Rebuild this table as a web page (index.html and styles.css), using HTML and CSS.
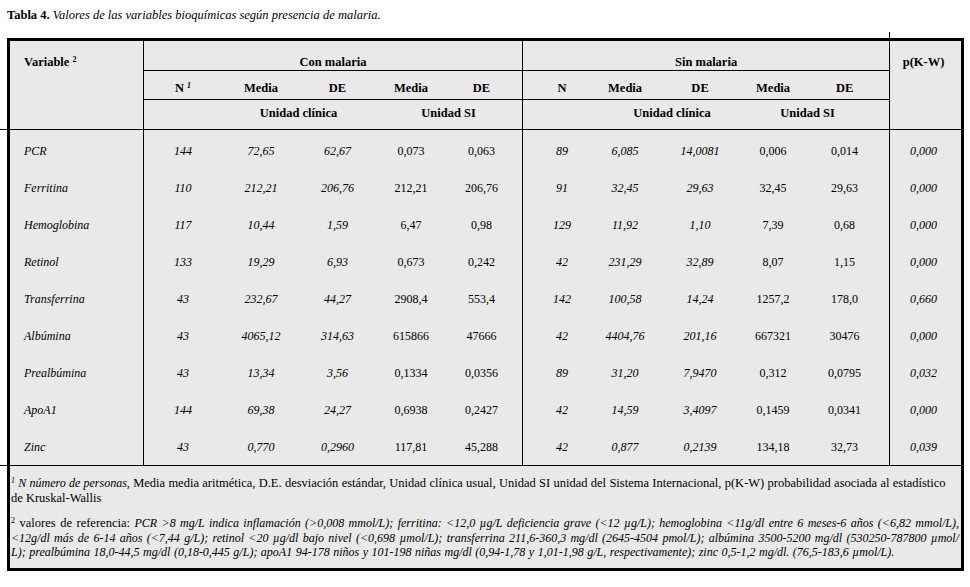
FILE: index.html
```html
<!DOCTYPE html>
<html lang="es">
<head>
<meta charset="utf-8">
<title>Tabla 4</title>
<link rel="stylesheet" href="styles.css">
</head>
<body>
<p class="caption"><b>Tabla 4.</b> <i>Valores de las variables bioquímicas según presencia de malaria.</i></p>
<div class="box">
  <span class="tick tick-h1"></span>
  <span class="tick tick-h2"></span>
  <span class="tick tick-v"></span>
  <table class="data">
    <colgroup>
      <col class="c-var">
      <col class="c-a1"><col class="c-a2"><col class="c-a3"><col class="c-a4"><col class="c-a5">
      <col class="c-b1"><col class="c-b2"><col class="c-b3"><col class="c-b4"><col class="c-b5">
      <col class="c-p">
    </colgroup>
    <thead>
      <tr class="r1">
        <th rowspan="3" class="var">Variable <sup>2</sup></th>
        <th colspan="5" class="grp end">Con malaria</th>
        <th colspan="5" class="grp end">Sin malaria</th>
        <th rowspan="3" class="pcol">p(K-W)</th>
      </tr>
      <tr class="r2">
        <th>N <sup class="it">1</sup></th><th>Media</th><th>DE</th><th>Media</th><th class="end a5">DE</th>
        <th class="b1">N</th><th class="b2">Media</th><th>DE</th><th>Media</th><th class="end b5">DE</th>
      </tr>
      <tr class="r3">
        <th></th><th colspan="2">Unidad clínica</th><th colspan="2" class="end">Unidad SI</th>
        <th></th><th colspan="2" class="ucb">Unidad clínica</th><th colspan="2" class="end usb">Unidad SI</th>
      </tr>
    </thead>
    <tbody>
      <tr><td>PCR</td><td>144</td><td>72,65</td><td>62,67</td><td>0,073</td><td>0,063</td><td>89</td><td>6,085</td><td>14,0081</td><td>0,006</td><td>0,014</td><td>0,000</td></tr>
      <tr><td>Ferritina</td><td>110</td><td>212,21</td><td>206,76</td><td>212,21</td><td>206,76</td><td>91</td><td>32,45</td><td>29,63</td><td>32,45</td><td>29,63</td><td>0,000</td></tr>
      <tr><td>Hemoglobina</td><td>117</td><td>10,44</td><td>1,59</td><td>6,47</td><td>0,98</td><td>129</td><td>11,92</td><td>1,10</td><td>7,39</td><td>0,68</td><td>0,000</td></tr>
      <tr><td>Retinol</td><td>133</td><td>19,29</td><td>6,93</td><td>0,673</td><td>0,242</td><td>42</td><td>231,29</td><td>32,89</td><td>8,07</td><td>1,15</td><td>0,000</td></tr>
      <tr><td>Transferrina</td><td>43</td><td>232,67</td><td>44,27</td><td>2908,4</td><td>553,4</td><td>142</td><td>100,58</td><td>14,24</td><td>1257,2</td><td>178,0</td><td>0,660</td></tr>
      <tr><td>Albúmina</td><td>43</td><td>4065,12</td><td>314,63</td><td>615866</td><td>47666</td><td>42</td><td>4404,76</td><td>201,16</td><td>667321</td><td>30476</td><td>0,000</td></tr>
      <tr><td>Prealbúmina</td><td>43</td><td>13,34</td><td>3,56</td><td>0,1334</td><td>0,0356</td><td>89</td><td>31,20</td><td>7,9470</td><td>0,312</td><td>0,0795</td><td>0,032</td></tr>
      <tr><td>ApoA1</td><td>144</td><td>69,38</td><td>24,27</td><td>0,6938</td><td>0,2427</td><td>42</td><td>14,59</td><td>3,4097</td><td>0,1459</td><td>0,0341</td><td>0,000</td></tr>
      <tr><td>Zinc</td><td>43</td><td>0,770</td><td>0,2960</td><td>117,81</td><td>45,288</td><td>42</td><td>0,877</td><td>0,2139</td><td>134,18</td><td>32,73</td><td>0,039</td></tr>
    </tbody>
  </table>
  <div class="notes">
    <p>
      <span class="ln first"><sup class="it">1</sup> <i>N número de personas,</i> Media media aritmética, D.E. desviación estándar, Unidad clínica usual, Unidad SI unidad del Sistema Internacional, p(K-W) probabilidad asociada al estadístico</span>
      <span class="ln">de Kruskal-Wallis</span>
    </p>
    <p>
      <span class="ln just"><sup>2</sup> valores de referencia: <i>PCR &gt;8 mg/L indica inflamación (&gt;0,008 mmol/L); ferritina: &lt;12,0 µg/L deficiencia grave (&lt;12 µg/L); hemoglobina &lt;11g/dl entre 6 meses-6 años (&lt;6,82 mmol/L),</i></span>
      <span class="ln just"><i>&lt;12g/dl más de 6-14 años (&lt;7,44 g/L); retinol &lt;20 µg/dl bajo nivel (&lt;0,698 µmol/L); transferrina 211,6-360,3 mg/dl (2645-4504 pmol/L); albúmina 3500-5200 mg/dl (530250-787800 µmol/</i></span>
      <span class="ln last"><i>L); prealbúmina 18,0-44,5 mg/dl (0,18-0,445 g/L); apoA1 94-178 niños y 101-198 niñas mg/dl (0,94-1,78 y 1,01-1,98 g/L, respectivamente); zinc 0,5-1,2 mg/dl. (76,5-183,6 µmol/L).</i></span>
    </p>
  </div>
</div>
</body>
</html>
```
FILE: styles.css
```css
html, body {
  background: #fff;
}
body {
  margin: 0;
  padding: 8px 6px 0 7px;
  font-family: "Liberation Serif", "Times New Roman", serif;
  color: #000;
}
.caption {
  margin: 0;
  font-size: 12.5px;
  line-height: 14px;
}
.box {
  position: relative;
  width: 957px;
  box-sizing: border-box;
  margin-top: 16px;
  border: 3px solid #000;
  background: #e9e9e9;
}
.tick {
  position: absolute;
  background: #000;
}
.tick-h1 { left: -10px; top: 88px; width: 7px; height: 1px; }
.tick-h2 { left: -10px; top: 424px; width: 7px; height: 1px; }
.tick-v { left: 879px; top: -9px; width: 1px; height: 6px; }

.data {
  width: 100%;
  table-layout: fixed;
  border-collapse: separate;
  border-spacing: 0;
  font-size: 12px;
  line-height: 14px;
}
.c-var { width: 134px; }
.c-a1 { width: 78px; }
.c-a2 { width: 78px; }
.c-a3 { width: 75px; }
.c-a4 { width: 72px; }
.c-a5 { width: 76px; }
.c-b1 { width: 71px; }
.c-b2 { width: 69px; }
.c-b3 { width: 74px; }
.c-b4 { width: 72px; }
.c-b5 { width: 81px; }
.c-p { width: 71px; }

th {
  font-weight: bold;
  font-size: 12.5px;
  text-align: center;
  padding: 0;
  white-space: nowrap;
}
sup {
  font-size: 8px;
  line-height: 0;
  vertical-align: 4px;
}
sup.it { font-style: italic; }
.r1 th {
  padding: 14px 0 1px;
  vertical-align: top;
}
.r1 .grp { border-bottom: 1px solid #000; }
.r1 .var {
  text-align: left;
  padding-left: 14px;
  border-right: 1px solid #000;
  border-bottom: 1px solid #000;
}
.r1 .pcol {
  padding-right: 4px;
  border-bottom: 1px solid #000;
}
.r2 th {
  padding: 10px 0 4px;
  border-bottom: 1px solid #000;
}
.r3 th {
  padding: 6px 0 9px;
  border-bottom: 1px solid #000;
}
.end { border-right: 1px solid #000; }
.r2 .a5 { padding-right: 6px; }
.r2 .b1 { padding-left: 7px; }
.r2 .b2 { padding-right: 7px; }
.r2 .b5 { padding-right: 9px; }
.r3 .ucb { padding-left: 13px; }
.r3 .usb { padding-right: 11px; }

td {
  padding: 14px 0 9px;
  text-align: center;
  font-style: italic;
  white-space: nowrap;
}
td:nth-child(1) {
  text-align: left;
  padding-left: 14px;
  border-right: 1px solid #000;
}
td:nth-child(5), td:nth-child(6),
td:nth-child(10), td:nth-child(11) {
  font-style: normal;
}
td:nth-child(6) { padding-right: 6px; border-right: 1px solid #000; }
td:nth-child(7) { padding-left: 7px; }
td:nth-child(8) { padding-right: 7px; }
td:nth-child(11) { padding-right: 9px; border-right: 1px solid #000; }
td:nth-child(12) { padding-right: 4px; }
tbody tr:last-child td {
  padding-bottom: 11px;
  border-bottom: 1px solid #000;
}

.notes {
  padding: 10px 2px 8px 1px;
  font-size: 12.5px;
  line-height: 14.5px;
}
.notes p { margin: 0; }
.notes p + p { margin-top: 11px; }
.notes i { font-size: 12px; }
.notes sup { font-size: 8px; vertical-align: 4px; }
.ln {
  display: block;
  white-space: nowrap;
}
.ln.first { word-spacing: 0.2px; }
.ln.last { word-spacing: 0.5px; }
.ln.just {
  white-space: normal;
  text-align: justify;
  text-align-last: justify;
}
```
